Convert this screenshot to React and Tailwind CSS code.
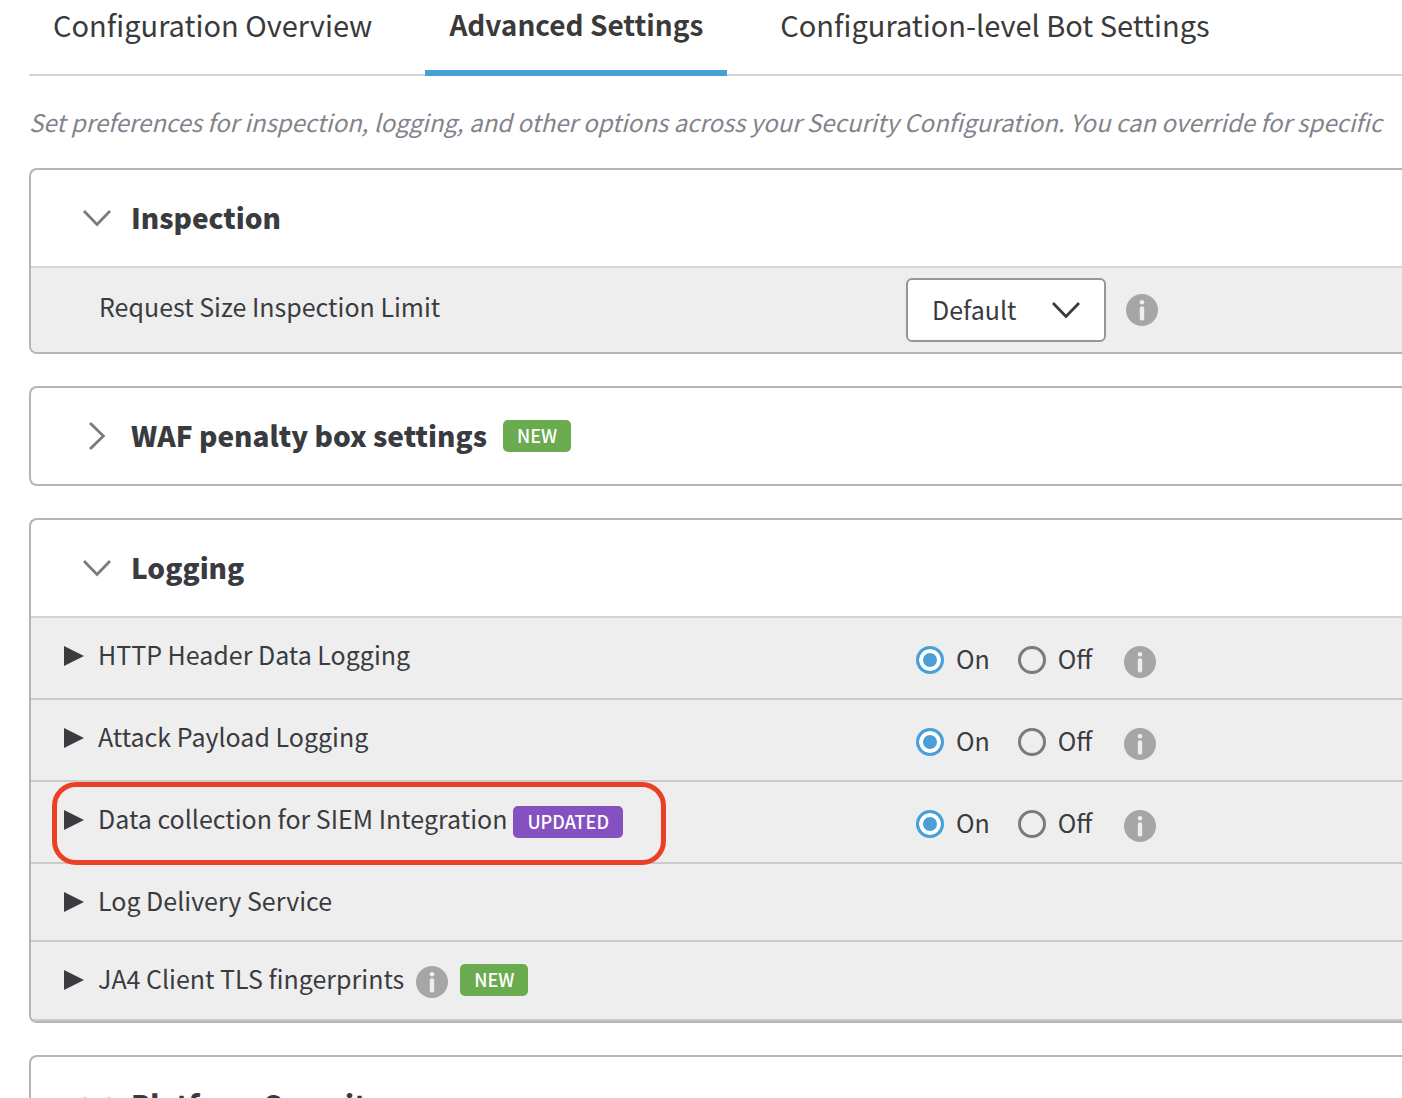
import { useState } from 'react'
import clsx from 'clsx'

const TABS = ['Configuration Overview', 'Advanced Settings', 'Configuration-level Bot Settings']

const LOGGING_ROWS = [
  { id: 'http-header', label: 'HTTP Header Data Logging', toggle: true },
  { id: 'attack-payload', label: 'Attack Payload Logging', toggle: true },
  { id: 'siem', label: 'Data collection for SIEM Integration', toggle: true, badge: 'UPDATED', highlight: true },
  { id: 'log-delivery', label: 'Log Delivery Service' },
  { id: 'ja4', label: 'JA4 Client TLS fingerprints', info: true, badge: 'NEW' },
]

const BADGE_STYLES = {
  NEW: 'bg-[#6aab50]',
  UPDATED: 'bg-[#8451c0]',
}

function Chevron({ open, className }) {
  return (
    <svg
      viewBox="0 0 28 28"
      className={clsx('size-7 shrink-0', !open && '-rotate-90', className)}
      fill="none"
      stroke="currentColor"
      strokeWidth="2.8"
      aria-hidden="true"
    >
      <path d="M1 7 L14 20.4 L27 7" />
    </svg>
  )
}

function InfoButton({ label, className }) {
  return (
    <button type="button" aria-label={`About ${label}`} className={clsx('size-8 shrink-0', className)}>
      <svg viewBox="0 0 32 32" className="size-8" aria-hidden="true">
        <circle cx="16" cy="16" r="16" fill="#a6a6a6" />
        <circle cx="16" cy="8.3" r="2.3" fill="#eee" />
        <rect x="13.8" y="12.2" width="4.4" height="14.4" rx="2.2" fill="#eee" />
      </svg>
    </button>
  )
}

function Badge({ children }) {
  return (
    <span
      className={clsx(
        'flex h-8 shrink-0 items-center rounded-[5px] px-3.5 pb-0.5 text-[18px] font-medium text-white',
        BADGE_STYLES[children]
      )}
    >
      {children}
    </span>
  )
}

function Section({ title, badge, defaultOpen = false, children }) {
  const [open, setOpen] = useState(defaultOpen)

  return (
    <section className="rounded-l-lg border-2 border-r-0 border-[#b5b5b5] bg-white">
      <h2>
        <button
          type="button"
          aria-expanded={open}
          onClick={() => setOpen(!open)}
          className="flex h-24 w-full items-center pl-13 text-left"
        >
          <Chevron open={open} className="text-[#7b7b7b]" />
          <span className="ml-5 pb-0.5 text-[28px] leading-10 font-black">{title}</span>
          {badge && <span className="ml-4"><Badge>{badge}</Badge></span>}
        </button>
      </h2>
      {open && children}
    </section>
  )
}

function OnOff({ name, label }) {
  const [value, setValue] = useState('On')

  return (
    <div role="radiogroup" aria-label={label} className="flex gap-7">
      {['On', 'Off'].map(option => (
        <label key={option} className="flex h-9 items-center gap-3">
          <input
            type="radio"
            name={name}
            checked={value === option}
            onChange={() => setValue(option)}
            className="size-7 appearance-none rounded-full border-3 border-[#7b7b7b]
                       checked:border-[#4a9fd6] checked:bg-[#4a9fd6]
                       checked:shadow-[inset_0_0_0_4px_white]"
          />
          <span className="pb-1">{option}</span>
        </label>
      ))}
    </div>
  )
}

function LoggingRow({ row }) {
  return (
    <li
      className="relative grid min-h-[78px] grid-cols-[875fr_496fr] items-start
                 border-b-2 border-[#cacaca] bg-[#eee] last:min-h-[79px]"
    >
      <div className="flex h-14 items-center pt-5 pl-[33px]">
        <button type="button" className="flex items-center gap-3.5 whitespace-nowrap">
          <svg viewBox="0 0 20 20" className="size-5" fill="currentColor" aria-hidden="true">
            <path d="M0 0 L20 10 L0 20 Z" />
          </svg>
          <span className="pb-1">{row.label}</span>
        </button>
        {row.info && <InfoButton label={row.label} className="mx-3 self-end" />}
        {row.badge && (
          <span className={clsx(!row.info && 'ml-1.5 self-end')}>
            <Badge>{row.badge}</Badge>
          </span>
        )}
      </div>
      {row.toggle && (
        <div className="flex h-20 items-start pt-6 pl-2.5">
          <OnOff name={row.id} label={row.label} />
          <InfoButton label={row.label} className="mt-1 ml-8" />
        </div>
      )}
      {row.highlight && (
        <div className="pointer-events-none absolute top-0 left-[21px] z-10 h-[83px] w-[614px] rounded-3xl border-5 border-[#ea4025]" />
      )}
    </li>
  )
}

export default function App() {
  const [activeTab, setActiveTab] = useState('Advanced Settings')

  return (
    <div className="h-screen overflow-hidden bg-white pl-[29px] font-['Noto_Sans_CJK_JP',sans-serif] text-[25px] leading-9 text-[#3a3b3f]">
      <nav className="flex h-[76px] gap-[29px] border-b-2 border-[#d5d5d5] whitespace-nowrap text-[#3a3a3a]">
        {TABS.map(tab => (
          <button
            key={tab}
            type="button"
            onClick={() => setActiveTab(tab)}
            className={clsx(
              'h-[76px] border-b-6 px-6 pb-[23px]',
              tab === activeTab ? 'border-[#4a9fd6] text-[28px] font-bold' : 'border-transparent text-[29px]'
            )}
          >
            {tab}
          </button>
        ))}
      </nav>

      <p className="my-7 overflow-hidden whitespace-nowrap text-[24px] text-[#83838c] italic">
        Set preferences for inspection, logging, and other options across your Security Configuration. You can override for specific
      </p>

      <main className="flex flex-col gap-8">
        <Section title="Inspection" defaultOpen>
          <div className="grid min-h-[86px] grid-cols-[875fr_496fr] items-center rounded-bl-md border-t-2 border-[#d5d5d5] bg-[#eee]">
            <label htmlFor="size-limit" className="pb-2 pl-[68px]">Request Size Inspection Limit</label>
            <div className="flex items-center gap-5">
              <div className="relative">
                <select
                  id="size-limit"
                  defaultValue="Default"
                  className="h-16 w-[200px] appearance-none rounded-md border-2 border-[#969696] bg-white pb-0.5 pl-6"
                >
                  <option>Default</option>
                </select>
                <Chevron open className="pointer-events-none absolute top-[18px] right-[26px]" />
              </div>
              <InfoButton label="Request Size Inspection Limit" />
            </div>
          </div>
        </Section>

        <Section title="WAF penalty box settings" badge="NEW" />

        <Section title="Logging" defaultOpen>
          <ul className="overflow-hidden rounded-bl-md border-t-2 border-[#d5d5d5]">
            {LOGGING_ROWS.map(row => (
              <LoggingRow key={row.id} row={row} />
            ))}
          </ul>
        </Section>

        <Section title="Platform Security" defaultOpen />
      </main>
    </div>
  )
}
